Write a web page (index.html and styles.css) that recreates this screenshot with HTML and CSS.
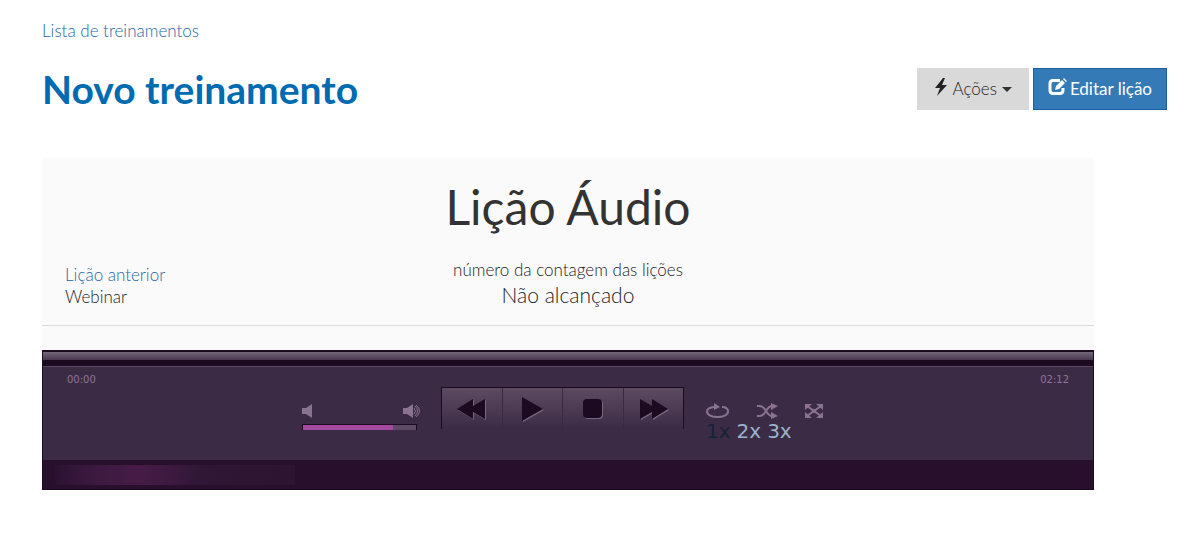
FILE: index.html
```html
<!DOCTYPE html>
<html lang="pt">
    <head>
        <meta charset="utf-8">
        <title>Novo treinamento</title>
        <link rel="stylesheet" href="styles.css">
    </head>
    <body>
        <nav class="breadcrumb"><a href="#">Lista de treinamentos</a></nav>
        <header class="page-header">
            <h1>Novo treinamento</h1>
            <div class="actions">
                <button type="button" class="btn btn-default">
                    <svg width="14" height="18" viewBox="0 0 14 18"><path d="M9 0 1 10h5L3 18 13 7H8L11 0z"/></svg>
                    Ações
                    <span class="caret"></span>
                </button>
                <button type="button" class="btn btn-primary">
                    <svg width="19" height="18" viewBox="0 0 19 18">
                        <path d="M12 2.500H5Q2 2.500 2 5.500V12Q2 15.500 5 15.500H12Q15 15.500 15 12V10" fill="none" stroke="#fff" stroke-width="3"/>
                        <path d="M7 12l1-4 6-6 3 3-6 6zM15 1l1-1 3 3-1 1z"/>
                    </svg>
                    Editar lição
                </button>
            </div>
        </header>

        <main class="lesson">
            <h2>Lição Áudio</h2>
            <div class="lesson-nav">
                <div class="previous">
                    <a href="#">Lição anterior</a>
                    <div>Webinar</div>
                </div>
                <div class="status">
                    <div>número da contagem das lições</div>
                    <div class="result">Não alcançado</div>
                </div>
            </div>

            <div class="player">
                <div class="seek"></div>
                <div class="times"><span>00:00</span><span>02:12</span></div>
                <div class="controls">
                    <div class="volume">
                        <div class="volume-icons">
                            <button type="button" aria-label="Mudo">
                                <svg width="10" height="14" viewBox="0 0 10 14"><path d="M0 4h4l6-4v14l-6-4H0z"/></svg>
                            </button>
                            <button type="button" aria-label="Volume máximo">
                                <svg width="18" height="14" viewBox="0 0 18 14">
                                    <path d="M0 4h4l6-4v14l-6-4H0z"/>
                                    <path d="M11 4q3 3 0 6M12 2q5 5 0 10M13 1q7 6 0 12" fill="none" stroke="#8a7391"/>
                                </svg>
                            </button>
                        </div>
                        <input type="range" min="0" max="100" value="80" aria-label="Volume">
                    </div>
                    <div class="transport">
                        <button type="button" aria-label="Anterior">
                            <svg width="32" height="24" viewBox="0 0 32 24"><path d="M1 12 17 2v7L29 2v20l-12-7v7z"/></svg>
                        </button>
                        <button type="button" aria-label="Tocar">
                            <svg width="24" height="26" viewBox="0 0 24 26"><path d="M2 1 23 13 2 25z"/></svg>
                        </button>
                        <button type="button" aria-label="Parar">
                            <svg width="22" height="22" viewBox="0 0 22 22"><rect x="1" y="1" width="19" height="19" rx="4"/></svg>
                        </button>
                        <button type="button" aria-label="Próximo">
                            <svg width="32" height="24" viewBox="0 0 32 24"><path d="M31 12 15 2v7L3 2v20l12-7v7z"/></svg>
                        </button>
                    </div>
                    <div class="options">
                        <div class="toggles">
                            <button type="button" aria-label="Repetir">
                                <svg width="24" height="16" viewBox="0 0 24 16">
                                    <path d="M16 4C21 4 22 6 22 8.500 22 12 17 14 11.500 14S1 12 1 8.500C1 5 5 4 10 4" fill="none" stroke="#8a7391" stroke-width="2"/>
                                    <path d="M8 0l6 4-6 3z"/>
                                </svg>
                            </button>
                            <button type="button" aria-label="Aleatório">
                                <svg width="21" height="16" viewBox="0 0 21 16">
                                    <path d="M0 3h3c6 0 6 10 12 10M0 13h3C9 13 9 3 15 3" fill="none" stroke="#8a7391" stroke-width="2"/>
                                    <path d="M14 0l7 3-7 4zM14 9l7 4-7 3z"/>
                                </svg>
                            </button>
                            <button type="button" aria-label="Tela cheia">
                                <svg width="20" height="16" viewBox="0 0 20 16">
                                    <path d="M3 3l14 10M17 3 3 13" stroke="#8a7391" stroke-width="2"/>
                                    <path d="M1 1h7L1 7zM12 1h7v6zM1 9v6h7zM19 9v6h-7z"/>
                                    <circle cx="10" cy="8" r="2"/>
                                </svg>
                            </button>
                        </div>
                        <div class="speeds">
                            <a href="#" class="current">1x</a>
                            <a href="#">2x</a>
                            <a href="#">3x</a>
                        </div>
                    </div>
                </div>
                <div class="playlist"><div class="glow"></div></div>
            </div>
        </main>
    </body>
</html>
```
FILE: styles.css
```css
* {
    box-sizing: border-box;
}

body {
    margin: 0;
    padding: 20px 32px 20px 42px;
    background: #fff;
    color: #222;
    font: 300 17px/22px Lato, sans-serif;
}

a {
    color: #1c68a8;
    text-decoration: none;
}

button {
    padding: 0;
    border: 0;
    background: none;
    font: inherit;
    cursor: pointer;
}

svg {
    display: block;
    fill: currentColor;
}

.page-header {
    display: flex;
    justify-content: space-between;
    align-items: flex-start;
    margin-top: 26px;
}

h1 {
    margin: 0;
    color: #006bb0;
    font-size: 39px;
    font-weight: 700;
    line-height: 42px;
}

.actions {
    display: flex;
    gap: 4px;
}

.btn {
    display: flex;
    align-items: center;
    gap: 5px;
    height: 42px;
    padding: 0 16px;
    border: 1px solid #d9d9d9;
    background: #d9d9d9;
    color: #222;
}

.btn-primary {
    gap: 3px;
    padding: 0 14px;
    background: #337ab7;
    border-color: #1b5f9e;
    color: #fff;
    font-weight: 400;
}

.btn svg {
    margin-bottom: 4px;
}

.caret {
    border: 5px solid transparent;
    border-top-color: #333;
    border-bottom: 0;
}

.lesson {
    margin: 48px 73px 0 0;
    padding-top: 19px;
    background: #fafafa;
}

h2 {
    margin: 0;
    color: #333;
    font-size: 48px;
    font-weight: 400;
    line-height: 60px;
    text-align: center;
}

.lesson-nav {
    display: grid;
    grid-template-columns: 1fr auto 1fr;
    padding: 22px 23px 16px;
    border-bottom: 1px solid #ddd;
}

.previous {
    padding-top: 5px;
}

.status {
    text-align: center;
}

.result {
    font-size: 21px;
    line-height: 28px;
}

.player {
    margin-top: 24px;
    border: 1px solid #1b0a20;
    background: #3c2b45;
    font-family: Verdana, "DejaVu Sans", sans-serif;
    font-weight: 400;
}

.seek {
    height: 16px;
    border-bottom: 1px solid #5d4a64;
    background: linear-gradient(#1b0a20 1px, #746779 1px, #483850 9px, #1b0a20 9px);
}

.times {
    display: flex;
    justify-content: space-between;
    padding: 6px 24px 0;
    color: #8e73a0;
    font-size: 10px;
    line-height: 14px;
}

.controls {
    display: flex;
    justify-content: center;
    height: 73px;
    color: #8a7391;
}

.controls button {
    color: inherit;
}

.volume {
    width: 115px;
    margin-right: 24px;
    padding-top: 17px;
}

.volume-icons {
    display: flex;
    justify-content: space-between;
    margin-right: -4px;
}

.volume input {
    appearance: none;
    display: block;
    width: 100%;
    height: 6px;
    margin: 6px 0 0;
    border: 1px solid #1b0a20;
    border-width: 1px 1px 0;
    background: linear-gradient(90deg, #a34aa0 80%, #5d4a64 80%);
}

.volume input::-webkit-slider-thumb {
    appearance: none;
    width: 1px;
    height: 1px;
}

.transport {
    display: flex;
    width: 243px;
    height: 42px;
    margin-right: 22px;
    border: 1px solid #1b0a20;
    border-bottom: 0;
    background: linear-gradient(#5b4a60, #3c2b45);
}

.transport button {
    display: flex;
    flex: 1;
    justify-content: center;
    align-items: center;
    color: #1b0a20;
}

.transport button + button {
    border-left: 1px solid #3a2942;
}

.transport svg {
    filter: drop-shadow(1px 1px 0 #7a677f);
}

.options {
    width: 128px;
    padding-top: 16px;
}

.toggles {
    display: flex;
    justify-content: space-between;
    width: 118px;
}

.speeds {
    display: flex;
    gap: 6px;
    font-size: 20px;
    line-height: 24px;
}

.speeds a {
    color: #9bb4cc;
}

.speeds .current {
    color: #152337;
}

.playlist {
    height: 29px;
    padding: 5px 12px;
    background: #280f2c;
}

.glow {
    width: 240px;
    height: 20px;
    background: linear-gradient(90deg, #2b1231, #3b193f 15%, #461c46 35%, #3b193f 50%, #2f1735 60%, #2d1531);
}
```
